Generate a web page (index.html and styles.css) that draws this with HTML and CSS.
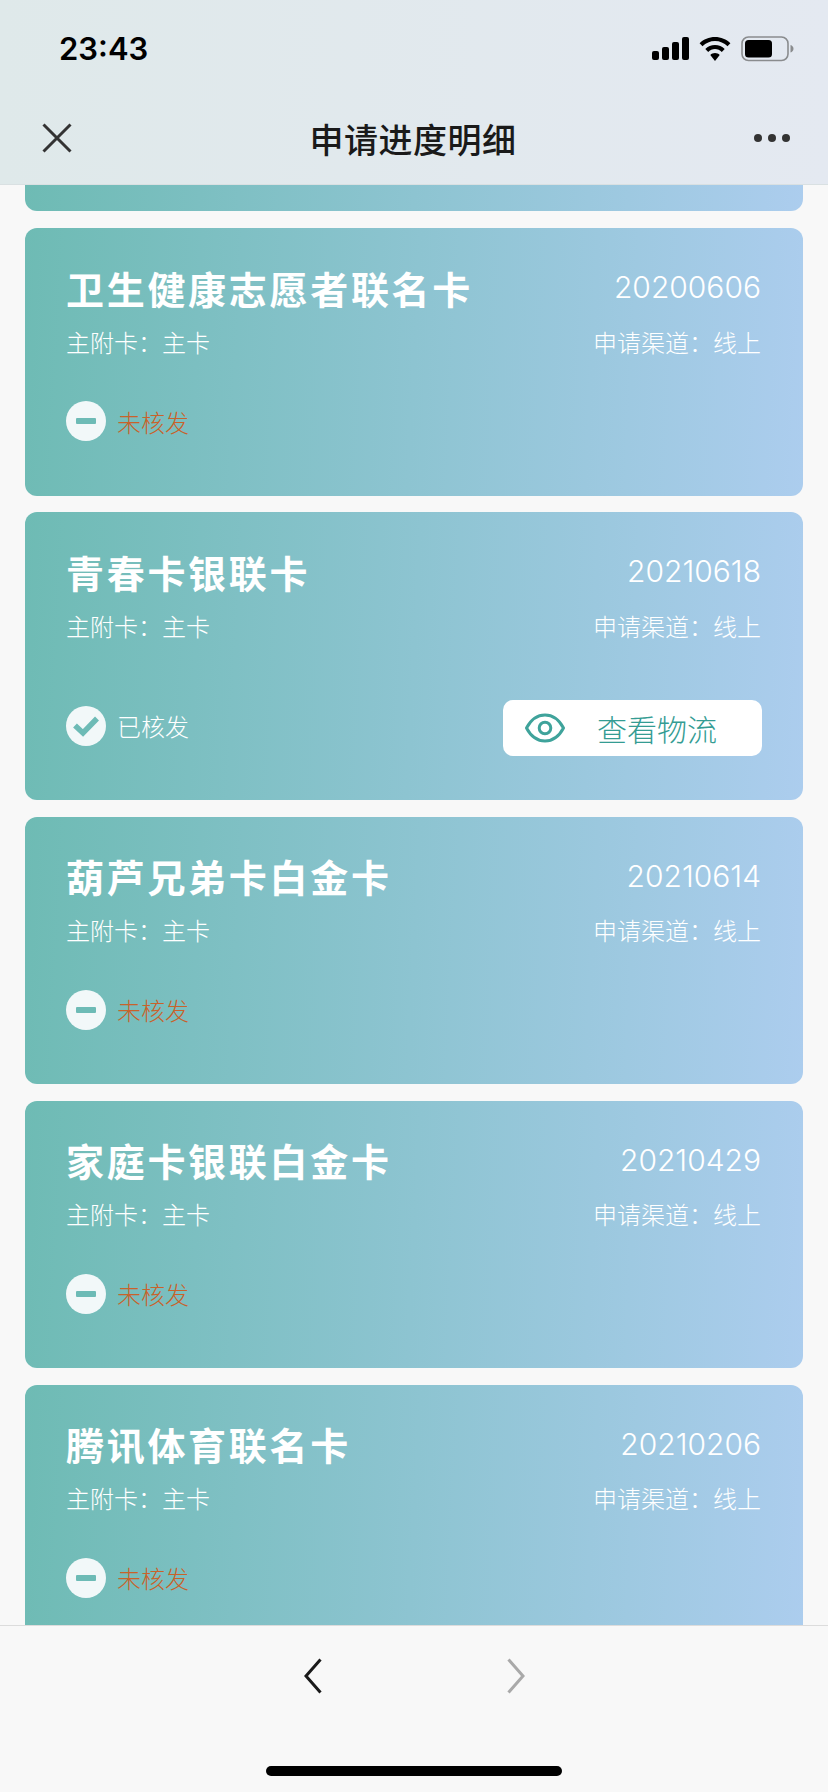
FILE: index.html
```html
<!DOCTYPE html>
<html lang="zh-CN">
<head>
    <meta charset="UTF-8">
    <meta name="viewport" content="width=device-width, initial-scale=1.0">
    <title>申请进度明细</title>
    <link rel="stylesheet" href="styles.css">
</head>
<body>
    <div class="page">
        <header class="header">
            <div class="status-bar">
                <span class="time">23:43</span>
                <div class="status-icons">
                    <svg class="icon-signal" width="37" height="23" viewBox="0 0 37 23">
                        <rect x="0" y="14" width="7" height="9" rx="2"/>
                        <rect x="10" y="10" width="7" height="13" rx="2"/>
                        <rect x="20" y="5" width="7" height="18" rx="2"/>
                        <rect x="30" y="0" width="7" height="23" rx="2"/>
                    </svg>
                    <svg class="icon-wifi" width="32" height="24" viewBox="0 0 32 24">
                        <path d="M16 0C10 0 4.600 2.300 .6 6.200l2.900 3C6.800 6 11.200 4 16 4s9.200 2 12.500 5.200l2.900-3C27.400 2.300 22 0 16 0z"/>
                        <path d="M16 8c-3.800 0-7.200 1.500-9.700 3.900l2.900 3C11 13.100 13.400 12 16 12s5 1.100 6.800 2.900l2.900-3C23.200 9.500 19.800 8 16 8z"/>
                        <path d="M16 16c-1.800 0-3.500.7-4.700 1.900L16 24l4.700-6.100C19.500 16.700 17.800 16 16 16z"/>
                    </svg>
                    <svg class="icon-battery" width="53" height="26" viewBox="0 0 53 26">
                        <rect x="1" y="1" width="46" height="23.500" rx="6.500" fill="none" stroke="#8a8c8e" stroke-width="1.600"/>
                        <rect x="4" y="4" width="27" height="17.500" rx="3.500" fill="#000"/>
                        <path d="M49.500 9c1.800.6 3 2 3 3.800s-1.200 3.200-3 3.800z" fill="#8a8c8e"/>
                    </svg>
                </div>
            </div>
            <div class="nav-bar">
                <svg class="icon-close" width="30" height="30" viewBox="0 0 30 30">
                    <path d="M1.500 1.500l27 27M28.500 1.500l-27 27"/>
                </svg>
                <h1 class="nav-title">申请进度明细</h1>
                <div class="icon-more"><i></i><i></i><i></i></div>
            </div>
        </header>

        <main class="list">
            <div class="card-stub"></div>

            <div class="card">
                <div class="card-head">
                    <span class="card-name">卫生健康志愿者联名卡</span>
                    <span class="card-date">20200606</span>
                </div>
                <div class="card-sub">
                    <span>主附卡：主卡</span>
                    <span>申请渠道：线上</span>
                </div>
                <div class="card-foot">
                    <div class="state state-pending">
                        <span class="state-icon"><i class="minus"></i></span>
                        <span>未核发</span>
                    </div>
                </div>
            </div>

            <div class="card card-action">
                <div class="card-head">
                    <span class="card-name">青春卡银联卡</span>
                    <span class="card-date">20210618</span>
                </div>
                <div class="card-sub">
                    <span>主附卡：主卡</span>
                    <span>申请渠道：线上</span>
                </div>
                <div class="card-foot">
                    <div class="state">
                        <span class="state-icon">
                            <svg width="28" height="22" viewBox="0 0 28 22"><path d="M3 10.500l8 7.500L25 3.500"/></svg>
                        </span>
                        <span>已核发</span>
                    </div>
                    <button class="track-btn">
                        <svg width="40" height="30" viewBox="0 0 40 30">
                            <path d="M1.500 15C6 6.500 12.500 2 20 2s14 4.500 18.500 13C34 23.500 27.500 28 20 28S6 23.500 1.500 15z"/>
                            <circle cx="20" cy="15" r="5.800"/>
                        </svg>
                        <span>查看物流</span>
                    </button>
                </div>
            </div>

            <div class="card">
                <div class="card-head">
                    <span class="card-name">葫芦兄弟卡白金卡</span>
                    <span class="card-date">20210614</span>
                </div>
                <div class="card-sub">
                    <span>主附卡：主卡</span>
                    <span>申请渠道：线上</span>
                </div>
                <div class="card-foot">
                    <div class="state state-pending">
                        <span class="state-icon"><i class="minus"></i></span>
                        <span>未核发</span>
                    </div>
                </div>
            </div>

            <div class="card">
                <div class="card-head">
                    <span class="card-name">家庭卡银联白金卡</span>
                    <span class="card-date">20210429</span>
                </div>
                <div class="card-sub">
                    <span>主附卡：主卡</span>
                    <span>申请渠道：线上</span>
                </div>
                <div class="card-foot">
                    <div class="state state-pending">
                        <span class="state-icon"><i class="minus"></i></span>
                        <span>未核发</span>
                    </div>
                </div>
            </div>

            <div class="card">
                <div class="card-head">
                    <span class="card-name">腾讯体育联名卡</span>
                    <span class="card-date">20210206</span>
                </div>
                <div class="card-sub">
                    <span>主附卡：主卡</span>
                    <span>申请渠道：线上</span>
                </div>
                <div class="card-foot">
                    <div class="state state-pending">
                        <span class="state-icon"><i class="minus"></i></span>
                        <span>未核发</span>
                    </div>
                </div>
            </div>
        </main>

        <footer class="footer">
            <div class="footer-nav">
                <svg class="chevron" width="18" height="36" viewBox="0 0 18 36"><path d="M16.500 1.500L2 18l14.500 16.500"/></svg>
                <svg class="chevron chevron-off" width="18" height="36" viewBox="0 0 18 36"><path d="M1.500 1.500L16 18 1.500 34.500"/></svg>
            </div>
            <div class="home-bar"></div>
        </footer>
    </div>
</body>
</html>
```

FILE: styles.css
```css
* {
    box-sizing: border-box;
}
body {
    margin: 0;
    background-color: #f8f8f8;
    font-family: "Noto Sans CJK SC", "Noto Sans", sans-serif;
}
.page {
    display: flex;
    flex-direction: column;
    height: 1792px;
    overflow: hidden;
}

/* header */
.header {
    flex: none;
    height: 185px;
    background: linear-gradient(90deg, #dfe9ea, #e4e9f1);
    border-bottom: 1px solid #d9e0e2;
}
.status-bar {
    display: flex;
    justify-content: space-between;
    align-items: center;
    height: 97px;
    padding: 0 34px 0 59px;
}
.time {
    font-family: Inter, sans-serif;
    font-size: 31px;
    font-weight: 600;
    color: #000;
}
.status-icons {
    display: flex;
    align-items: center;
    gap: 10px;
}
.nav-bar {
    display: flex;
    justify-content: space-between;
    align-items: center;
    height: 82px;
    padding: 0 38px 0 42px;
}
.icon-close path {
    fill: none;
    stroke: #333;
    stroke-width: 3;
}
.nav-title {
    margin: 0;
    font-size: 34px;
    font-weight: 500;
    letter-spacing: 0.5px;
    color: #1a1a1a;
}
.icon-more {
    display: flex;
    gap: 6px;
}
.icon-more i {
    width: 8px;
    height: 8px;
    border-radius: 50%;
    background-color: #333;
}

/* list */
.list {
    flex: 1;
    min-height: 0;
    overflow: hidden;
    padding: 0 25px;
}
.card-stub,
.card {
    background: linear-gradient(93deg, #6ebbb4, #accdee);
}
.card-stub {
    height: 27px;
    margin-top: -1px;
    margin-bottom: 17px;
    border-radius: 0 0 12px 12px;
}
.card {
    margin-bottom: 16.500px;
    padding: 37px 42px 54.500px 41px;
    border-radius: 12px;
    color: #fff;
}
.card-action {
    padding-bottom: 44px;
}
.card-head,
.card-sub,
.card-foot {
    display: flex;
    justify-content: space-between;
    align-items: center;
}
.card-head {
    height: 44px;
}
.card-name {
    font-size: 38px;
    font-weight: 700;
    letter-spacing: 2.700px;
}
.card-date {
    font-family: Inter, sans-serif;
    font-size: 30px;
    font-weight: 300;
    color: #fff;
}
.card-sub {
    height: 32px;
    margin-top: 16px;
    font-size: 24px;
    font-weight: 300;
    color: #fff;
}
.card-foot {
    margin-top: 44px;
}
.card-action .card-foot {
    margin-top: 59px;
}

/* status */
.state {
    display: flex;
    align-items: center;
    gap: 11px;
    height: 40px;
    font-size: 24px;
    font-weight: 300;
    color: #fff;
}
.card-action .state {
    margin-bottom: 5px;
}
.state-pending {
    color: #c9622a;
}
.state-icon {
    display: flex;
    justify-content: center;
    align-items: center;
    width: 40px;
    height: 40px;
    border-radius: 50%;
    background-color: #f2f8f9;
}
.state-icon svg path {
    fill: none;
    stroke: #6dbbb6;
    stroke-width: 5.500;
}
.minus {
    width: 20px;
    height: 6px;
    border-radius: 1px;
    background-color: #6dbbb6;
}
.track-btn {
    display: flex;
    align-items: center;
    gap: 32px;
    width: 259px;
    height: 56px;
    margin-right: -1px;
    padding: 0 0 0 22px;
    border: none;
    border-radius: 10px;
    background-color: #fff;
    font-family: inherit;
    font-size: 30px;
    font-weight: 300;
    color: #349c93;
}
.track-btn svg * {
    fill: none;
    stroke: #3fa39b;
    stroke-width: 3;
}

/* footer */
.footer {
    flex: none;
    height: 167px;
    background-color: #f8f8f8;
    border-top: 1px solid #dcdcdc;
}
.footer-nav {
    display: flex;
    justify-content: center;
    gap: 185px;
    height: 140px;
    padding-top: 32px;
}
.chevron {
    fill: none;
    stroke: #1a1a1a;
    stroke-width: 3;
}
.chevron-off {
    stroke: #a9a9a9;
}
.home-bar {
    width: 296px;
    height: 10px;
    margin: 0 auto;
    border-radius: 5px;
    background-color: #000;
}
```
